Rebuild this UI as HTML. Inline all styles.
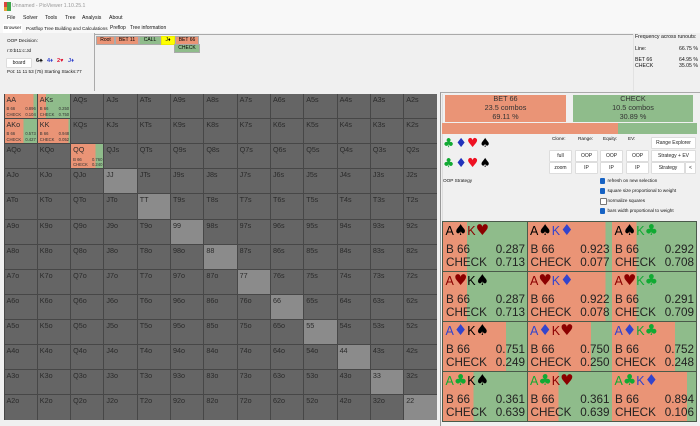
<!DOCTYPE html>
<html><head><meta charset="utf-8"><style>
html,body{margin:0;padding:0}
body{width:700px;height:426px;position:relative;overflow:hidden;background:#f0f0f0;font-family:"Liberation Sans",sans-serif;color:#111;filter:blur(.22px)}
.a{position:absolute;white-space:nowrap;font-size:4.7px;line-height:7px}
.m{font-size:5.2px}
#top{position:absolute;left:0;top:0;width:700px;height:33px;background:#f8f8f8}
#grid{position:absolute;left:4px;top:93.5px;width:433px;height:326.5px;background:#474747;display:grid;grid-template-columns:repeat(13,1fr);grid-template-rows:repeat(13,1fr);gap:1px;padding:.5px;box-sizing:border-box}
#grid div{background:#656565;font-size:7.2px;line-height:9px;padding:1px 0 0 2px;color:#2a2a2a;position:relative;overflow:hidden;min-width:0;min-height:0}
#grid div.p{background:#8b8b8b}
#grid i{position:absolute;left:2px;right:1px;bottom:1px;font-style:normal;font-size:4.2px;line-height:5.4px;color:#333}
#grid i span{display:flex;justify-content:space-between}
#grid b{font-weight:400}
.tag{position:absolute;font-size:5px;line-height:7px;text-align:center;height:7px;border:.5px solid #aaa;color:#000}
.r{background:#ea9476}.g{background:#8fbc8b}
.btn{position:absolute;background:#fff;border:.5px solid #ddd;border-radius:1px;font-size:5px;line-height:10px;text-align:center;height:10px;color:#222;box-sizing:content-box}
.st{position:absolute;text-align:center;font-size:7.3px;line-height:8.8px;color:#333;height:27px;top:95px}
.cb{position:absolute;left:599.5px;width:5.5px;height:5.5px;background:#1763c4;border-radius:1px}
.cb.off{background:#fff;border:.5px solid #777;width:5px;height:5px}
.card{position:absolute;width:84px;height:49px;overflow:hidden;color:#222}
.card .h{position:absolute;left:2.5px;top:1px;font-size:12.5px;line-height:15px;white-space:nowrap}
.card .h u{text-decoration:none;font-family:"DejaVu Sans",sans-serif;font-size:15px;line-height:15px}
.card .l{position:absolute;left:3px;right:2px;font-size:11.7px;line-height:13px;display:flex;justify-content:space-between}
.card .l1{top:21px}.card .l2{top:34px}
.k{color:#000}.d{color:#8b0000}.b{color:#3344cc}.c{color:#11aa33}
.s{position:absolute;font-size:12.5px;line-height:12px;font-family:"DejaVu Sans",sans-serif}
</style></head><body>
<div id="top"></div>
<svg style="position:absolute;left:4px;top:2px" width="7" height="9"><rect width="7" height="5" fill="#d9453d"/><rect x="3" width="4" height="5" fill="#3fa64c"/><rect y="5" width="7" height="4" fill="#3fa64c"/><rect y="5" width="3" height="4" fill="#e8a13a"/></svg>
<div class="a m" style="left:12px;top:3px;color:#999">Unnamed - PioViewer 1.10.25.1</div>
<div class="a m" style="left:7px;top:14.5px">File</div>
<div class="a m" style="left:23px;top:14.5px">Solver</div>
<div class="a m" style="left:45px;top:14.5px">Tools</div>
<div class="a m" style="left:65px;top:14.5px">Tree</div>
<div class="a m" style="left:82px;top:14.5px">Analysis</div>
<div class="a m" style="left:109px;top:14.5px">About</div>
<div class="a" style="left:3px;top:24px;width:19px;height:9px;background:#fff;line-height:8px;padding-left:1px;box-sizing:border-box">Browser</div>
<div class="a" style="left:26px;top:25px;font-size:4.7px">Postflop Tree Building and Calculations</div>
<div class="a" style="left:110px;top:25px;font-size:5px">Preflop</div>
<div class="a" style="left:130px;top:25px;font-size:5px">Tree information</div>

<div style="position:absolute;left:94px;top:33px;width:1px;height:58px;background:#aaa"></div>
<div style="position:absolute;left:94px;top:33.5px;width:539px;height:1px;background:#aaa"></div>
<div style="position:absolute;left:633px;top:34px;width:1px;height:57px;background:#e2e2e2"></div>

<div class="a" style="left:7px;top:37px">OOP Decision:</div>
<div class="a" style="left:7px;top:47px">r:0:b11:c:Jd</div>
<div class="btn" style="left:6px;top:58px;width:24px;height:8px;line-height:8px;font-size:5px">board</div>
<div class="a" style="left:36px;top:58px;font-size:5.6px;font-weight:bold;color:#111">6♣</div>
<div class="a" style="left:47px;top:58px;font-size:5.6px;font-weight:bold;color:#3344cc">4♦</div>
<div class="a" style="left:57px;top:58px;font-size:5.6px;font-weight:bold;color:#e01030">2♥</div>
<div class="a" style="left:68px;top:58px;font-size:5.6px;font-weight:bold;color:#3344cc">J♦</div>
<div class="a" style="left:7px;top:67.5px;font-size:4.6px">Pot: 11 11 53 (75) Starting Stacks:77</div>

<div class="tag r" style="left:96px;top:35.5px;width:17px">Root</div>
<div class="tag r" style="left:115px;top:35.5px;width:22px">BET 11</div>
<div class="tag g" style="left:139px;top:35.5px;width:20px">CALL</div>
<div class="tag" style="left:161px;top:35.5px;width:12px;background:#ff0;border-color:#ee0">J♦</div>
<div class="tag r" style="left:175px;top:35.5px;width:22px">BET 66</div>
<div class="tag g" style="left:174px;top:44px;width:24px">CHECK</div>

<div class="a" style="left:635px;top:33.5px;font-size:5.2px">Frequency across runouts:</div>
<div class="a" style="left:635px;top:45.5px;font-size:5.2px">Line:</div>
<div class="a" style="right:2px;top:45.5px;font-size:5.2px">66.75 %</div>
<div class="a" style="left:635px;top:56.5px;font-size:5.2px">BET 66</div>
<div class="a" style="right:2px;top:56.5px;font-size:5.2px">64.95 %</div>
<div class="a" style="left:635px;top:62.5px;font-size:5.2px">CHECK</div>
<div class="a" style="right:2px;top:62.5px;font-size:5.2px">35.05 %</div>

<div id="grid">
<div style="background:linear-gradient(90deg,#ea9476 89.6%,#8fbc8b 89.6%)">AA<i><span><b>B 66</b><b>0.896</b></span><span><b>CHECK</b><b>0.104</b></span></i></div>
<div style="background:linear-gradient(90deg,#ea9476 25%,#8fbc8b 25%)">AKs<i><span><b>B 66</b><b>0.250</b></span><span><b>CHECK</b><b>0.750</b></span></i></div>
<div>AQs</div><div>AJs</div><div>ATs</div><div>A9s</div><div>A8s</div><div>A7s</div><div>A6s</div><div>A5s</div><div>A4s</div><div>A3s</div><div>A2s</div>
<div style="background:linear-gradient(90deg,#ea9476 57.3%,#8fbc8b 57.3%)">AKo<i><span><b>B 66</b><b>0.573</b></span><span><b>CHECK</b><b>0.427</b></span></i></div>
<div style="background:linear-gradient(90deg,#ea9476 94.8%,#8fbc8b 94.8%)">KK<i><span><b>B 66</b><b>0.948</b></span><span><b>CHECK</b><b>0.052</b></span></i></div>
<div>KQs</div><div>KJs</div><div>KTs</div><div>K9s</div><div>K8s</div><div>K7s</div><div>K6s</div><div>K5s</div><div>K4s</div><div>K3s</div><div>K2s</div>
<div>AQo</div><div>KQo</div>
<div style="background:linear-gradient(90deg,#ea9476 76%,#8fbc8b 76%)">QQ<i><span><b>B 66</b><b>0.760</b></span><span><b>CHECK</b><b>0.240</b></span></i></div>
<div>QJs</div><div>QTs</div><div>Q9s</div><div>Q8s</div><div>Q7s</div><div>Q6s</div><div>Q5s</div><div>Q4s</div><div>Q3s</div><div>Q2s</div>
<div>AJo</div><div>KJo</div><div>QJo</div><div class="p">JJ</div><div>JTs</div><div>J9s</div><div>J8s</div><div>J7s</div><div>J6s</div><div>J5s</div><div>J4s</div><div>J3s</div><div>J2s</div>
<div>ATo</div><div>KTo</div><div>QTo</div><div>JTo</div><div class="p">TT</div><div>T9s</div><div>T8s</div><div>T7s</div><div>T6s</div><div>T5s</div><div>T4s</div><div>T3s</div><div>T2s</div>
<div>A9o</div><div>K9o</div><div>Q9o</div><div>J9o</div><div>T9o</div><div class="p">99</div><div>98s</div><div>97s</div><div>96s</div><div>95s</div><div>94s</div><div>93s</div><div>92s</div>
<div>A8o</div><div>K8o</div><div>Q8o</div><div>J8o</div><div>T8o</div><div>98o</div><div class="p">88</div><div>87s</div><div>86s</div><div>85s</div><div>84s</div><div>83s</div><div>82s</div>
<div>A7o</div><div>K7o</div><div>Q7o</div><div>J7o</div><div>T7o</div><div>97o</div><div>87o</div><div class="p">77</div><div>76s</div><div>75s</div><div>74s</div><div>73s</div><div>72s</div>
<div>A6o</div><div>K6o</div><div>Q6o</div><div>J6o</div><div>T6o</div><div>96o</div><div>86o</div><div>76o</div><div class="p">66</div><div>65s</div><div>64s</div><div>63s</div><div>62s</div>
<div>A5o</div><div>K5o</div><div>Q5o</div><div>J5o</div><div>T5o</div><div>95o</div><div>85o</div><div>75o</div><div>65o</div><div class="p">55</div><div>54s</div><div>53s</div><div>52s</div>
<div>A4o</div><div>K4o</div><div>Q4o</div><div>J4o</div><div>T4o</div><div>94o</div><div>84o</div><div>74o</div><div>64o</div><div>54o</div><div class="p">44</div><div>43s</div><div>42s</div>
<div>A3o</div><div>K3o</div><div>Q3o</div><div>J3o</div><div>T3o</div><div>93o</div><div>83o</div><div>73o</div><div>63o</div><div>53o</div><div>43o</div><div class="p">33</div><div>32s</div>
<div>A2o</div><div>K2o</div><div>Q2o</div><div>J2o</div><div>T2o</div><div>92o</div><div>82o</div><div>72o</div><div>62o</div><div>52o</div><div>42o</div><div>32o</div><div class="p">22</div>
</div>

<div style="position:absolute;left:440px;top:92px;width:260px;height:334px;border-left:1px solid #999;border-top:1px solid #aaa;box-sizing:border-box"></div>
<div style="position:absolute;left:442px;top:94px;width:1px;height:127px;background:#ddd"></div>
<div class="st r" style="left:445px;width:121px">BET 66<br>23.5 combos<br>69.11 %</div>
<div class="st g" style="left:573px;width:120px">CHECK<br>10.5 combos<br>30.89 %</div>
<div style="position:absolute;left:442px;top:122.5px;width:176px;height:11.5px;background:#ea9476"></div>
<div style="position:absolute;left:618px;top:122.5px;width:79px;height:11.5px;background:#8fbc8b"></div>

<div class="s" style="left:443px;top:137px;color:#11aa33">♣</div>
<div class="s" style="left:455.5px;top:137px;color:#2233bb">♦</div>
<div class="s" style="left:467px;top:137px;color:#ee1122">♥</div>
<div class="s" style="left:479.5px;top:137px;color:#000">♠</div>
<div class="s" style="left:443px;top:157px;color:#11aa33">♣</div>
<div class="s" style="left:455.5px;top:157px;color:#2233bb">♦</div>
<div class="s" style="left:467px;top:157px;color:#ee1122">♥</div>
<div class="s" style="left:479.5px;top:157px;color:#000">♠</div>
<div class="a" style="left:443px;top:177px">OOP Strategy</div>

<div class="a" style="left:552px;top:135px">Clone:</div>
<div class="a" style="left:578px;top:135px">Range:</div>
<div class="a" style="left:603px;top:135px">Equity:</div>
<div class="a" style="left:628px;top:135px">EV:</div>
<div class="btn" style="left:651px;top:137px;width:43px">Range Explorer</div>
<div class="btn" style="left:549px;top:149.5px;width:21px">full</div>
<div class="btn" style="left:575px;top:149.5px;width:21px">OOP</div>
<div class="btn" style="left:600px;top:149.5px;width:21px">OOP</div>
<div class="btn" style="left:626px;top:149.5px;width:21px">OOP</div>
<div class="btn" style="left:651px;top:149.5px;width:43px">Strategy + EV</div>
<div class="btn" style="left:549px;top:161.5px;width:21px">zoom</div>
<div class="btn" style="left:575px;top:161.5px;width:21px">IP</div>
<div class="btn" style="left:600px;top:161.5px;width:21px">IP</div>
<div class="btn" style="left:626px;top:161.5px;width:21px">IP</div>
<div class="btn" style="left:651px;top:161.5px;width:32px">Strategy</div>
<div class="btn" style="left:685px;top:161.5px;width:9px">&lt;</div>

<div class="cb" style="top:178px"></div><div class="a" style="left:607.5px;top:177px;font-size:4.6px">refresh on new selection</div>
<div class="cb" style="top:188px"></div><div class="a" style="left:607.5px;top:187px;font-size:4.6px">square size proportional to weight</div>
<div class="cb off" style="top:198px"></div><div class="a" style="left:607.5px;top:197px;font-size:4.6px">normalize squares</div>
<div class="cb" style="top:208px"></div><div class="a" style="left:607.5px;top:207px;font-size:4.6px">bars width proportional to weight</div>

<div style="position:absolute;left:442px;top:221px;width:254.5px;height:201px;background:#4a5a4a"></div>

<div class="card" style="left:443px;top:221.5px;background:linear-gradient(90deg,#ea9476 28.7%,#8fbc8b 28.7%)"><div class="h"><span class="k">A<u>♠</u></span><span class="d">K<u>♥</u></span></div><div class="l l1"><span>B 66</span><span>0.287</span></div><div class="l l2"><span>CHECK</span><span>0.713</span></div></div>
<div class="card" style="left:527.5px;top:221.5px;background:linear-gradient(90deg,#ea9476 92.3%,#8fbc8b 92.3%)"><div class="h"><span class="k">A<u>♠</u></span><span class="b">K<u>♦</u></span></div><div class="l l1"><span>B 66</span><span>0.923</span></div><div class="l l2"><span>CHECK</span><span>0.077</span></div></div>
<div class="card" style="left:612px;top:221.5px;background:linear-gradient(90deg,#ea9476 29.2%,#8fbc8b 29.2%)"><div class="h"><span class="k">A<u>♠</u></span><span class="c">K<u>♣</u></span></div><div class="l l1"><span>B 66</span><span>0.292</span></div><div class="l l2"><span>CHECK</span><span>0.708</span></div></div>

<div class="card" style="left:443px;top:271.5px;background:linear-gradient(90deg,#ea9476 28.7%,#8fbc8b 28.7%)"><div class="h"><span class="d">A<u>♥</u></span><span class="k">K<u>♠</u></span></div><div class="l l1"><span>B 66</span><span>0.287</span></div><div class="l l2"><span>CHECK</span><span>0.713</span></div></div>
<div class="card" style="left:527.5px;top:271.5px;background:linear-gradient(90deg,#ea9476 92.2%,#8fbc8b 92.2%)"><div class="h"><span class="d">A<u>♥</u></span><span class="b">K<u>♦</u></span></div><div class="l l1"><span>B 66</span><span>0.922</span></div><div class="l l2"><span>CHECK</span><span>0.078</span></div></div>
<div class="card" style="left:612px;top:271.5px;background:linear-gradient(90deg,#ea9476 29.1%,#8fbc8b 29.1%)"><div class="h"><span class="d">A<u>♥</u></span><span class="c">K<u>♣</u></span></div><div class="l l1"><span>B 66</span><span>0.291</span></div><div class="l l2"><span>CHECK</span><span>0.709</span></div></div>

<div class="card" style="left:443px;top:321.5px;background:linear-gradient(90deg,#ea9476 75.1%,#8fbc8b 75.1%)"><div class="h"><span class="b">A<u>♦</u></span><span class="k">K<u>♠</u></span></div><div class="l l1"><span>B 66</span><span>0.751</span></div><div class="l l2"><span>CHECK</span><span>0.249</span></div></div>
<div class="card" style="left:527.5px;top:321.5px;background:linear-gradient(90deg,#ea9476 75%,#8fbc8b 75%)"><div class="h"><span class="b">A<u>♦</u></span><span class="d">K<u>♥</u></span></div><div class="l l1"><span>B 66</span><span>0.750</span></div><div class="l l2"><span>CHECK</span><span>0.250</span></div></div>
<div class="card" style="left:612px;top:321.5px;background:linear-gradient(90deg,#ea9476 75.2%,#8fbc8b 75.2%)"><div class="h"><span class="b">A<u>♦</u></span><span class="c">K<u>♣</u></span></div><div class="l l1"><span>B 66</span><span>0.752</span></div><div class="l l2"><span>CHECK</span><span>0.248</span></div></div>

<div class="card" style="left:443px;top:371.5px;background:linear-gradient(90deg,#ea9476 36.1%,#8fbc8b 36.1%)"><div class="h"><span class="c">A<u>♣</u></span><span class="k">K<u>♠</u></span></div><div class="l l1"><span>B 66</span><span>0.361</span></div><div class="l l2"><span>CHECK</span><span>0.639</span></div></div>
<div class="card" style="left:527.5px;top:371.5px;background:linear-gradient(90deg,#ea9476 36.1%,#8fbc8b 36.1%)"><div class="h"><span class="c">A<u>♣</u></span><span class="d">K<u>♥</u></span></div><div class="l l1"><span>B 66</span><span>0.361</span></div><div class="l l2"><span>CHECK</span><span>0.639</span></div></div>
<div class="card" style="left:612px;top:371.5px;background:linear-gradient(90deg,#ea9476 89.4%,#8fbc8b 89.4%)"><div class="h"><span class="c">A<u>♣</u></span><span class="b">K<u>♦</u></span></div><div class="l l1"><span>B 66</span><span>0.894</span></div><div class="l l2"><span>CHECK</span><span>0.106</span></div></div>
</body></html>
